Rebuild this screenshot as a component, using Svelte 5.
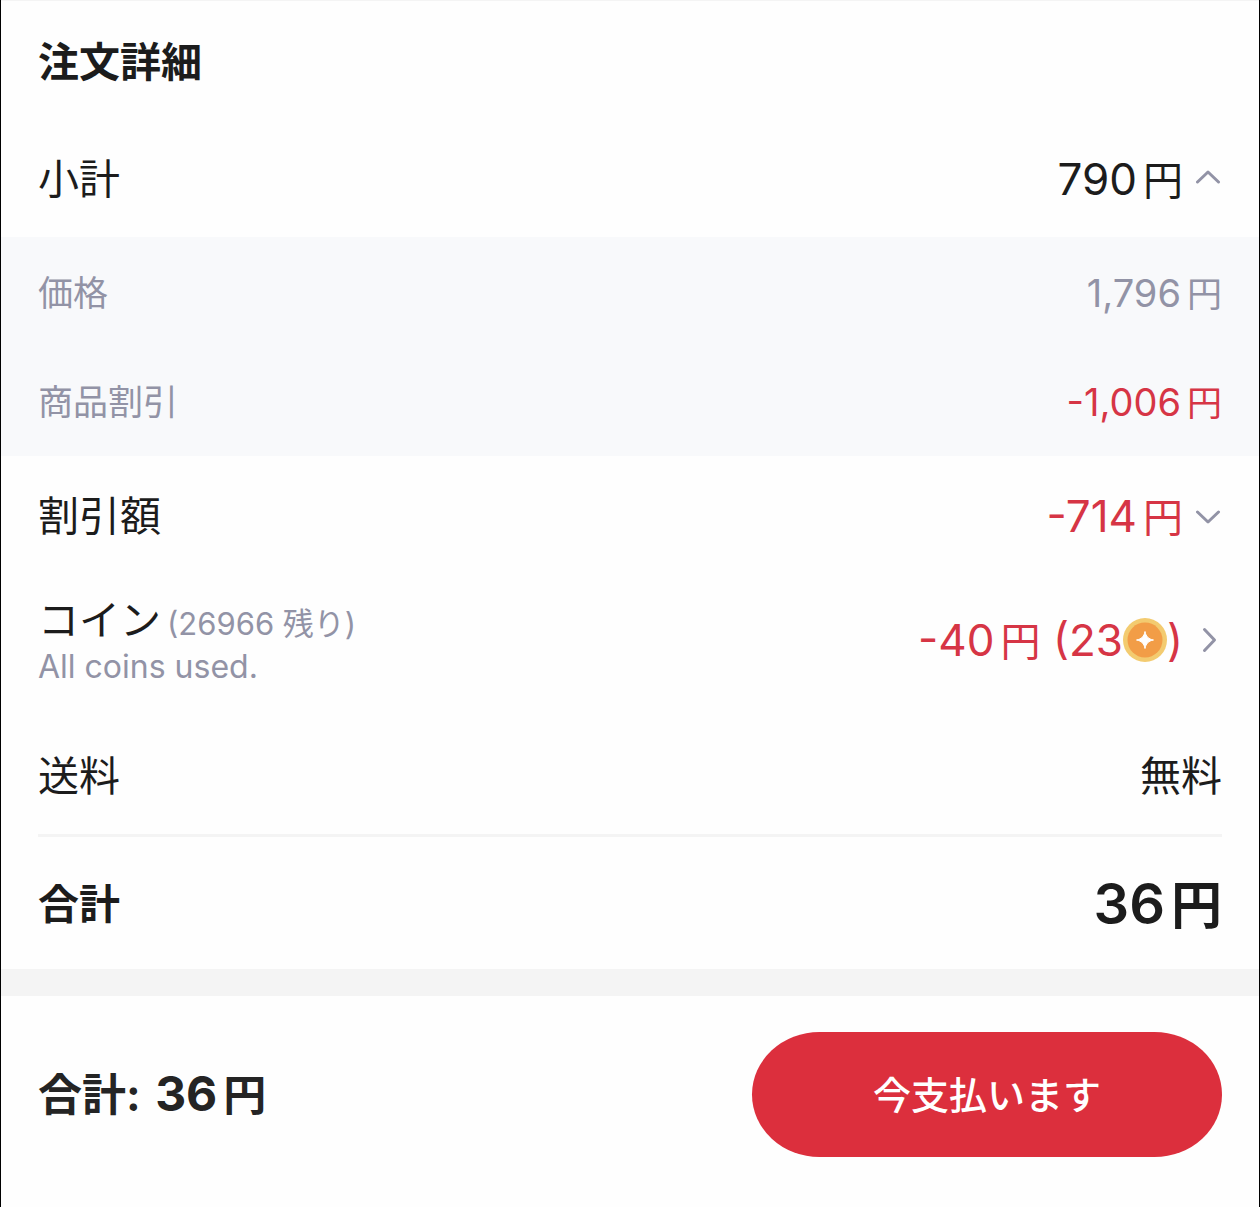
<script>
  let subtotalOpen = $state(true);
  let discountOpen = $state(false);

  const breakdown = [
    { label: '価格', amount: '1,796' },
    { label: '商品割引', amount: '-1,006', minus: true },
  ];
</script>

{#snippet yen(amount)}
  {amount}<span class="unit">円</span>
{/snippet}

{#snippet chevron(open)}
  <svg class="icon" viewBox="0 0 26 26" aria-hidden="true">
    {#if open}
      <path d="M1.500 16 12 6l10.500 10" />
    {:else}
      <path d="M1.500 9 12 19l10.500-10" />
    {/if}
  </svg>
{/snippet}

<main class="checkout">
  <section class="details">
    <h2>注文詳細</h2>

    <div class="row">
      <span>小計</span>
      <button
        type="button"
        class="value"
        aria-expanded={subtotalOpen}
        onclick={() => (subtotalOpen = !subtotalOpen)}
      >
        <span>{@render yen('790')}</span>
        {@render chevron(subtotalOpen)}
      </button>
    </div>

    {#if subtotalOpen}
      <div class="breakdown">
        {#each breakdown as item (item.label)}
          <div class="row sub">
            <span>{item.label}</span>
            <span class="value" class:minus={item.minus}>
              <span>{@render yen(item.amount)}</span>
            </span>
          </div>
        {/each}
      </div>
    {/if}

    <div class="row">
      <span>割引額</span>
      <button
        type="button"
        class="value minus"
        aria-expanded={discountOpen}
        onclick={() => (discountOpen = !discountOpen)}
      >
        <span>{@render yen('-714')}</span>
        {@render chevron(discountOpen)}
      </button>
    </div>

    <div class="row coins">
      <div>
        <div class="coin-label">コイン<span class="note">(26966 残り)</span></div>
        <div class="hint">All coins used.</div>
      </div>
      <button type="button" class="value minus">
        <span class="coin-amount">
          <span>{@render yen('-40')} (23</span>
          <svg class="coin" viewBox="0 0 44 44" aria-hidden="true">
            <circle cx="22" cy="22" r="22" fill="#f3cb70" />
            <circle cx="22" cy="22" r="17.5" fill="#f29d47" />
            <path
              d="M22 13.500c1 5 3.500 7.500 8.500 8.500c-5 1-7.500 3.500-8.500 8.500c-1-5-3.500-7.500-8.500-8.500c5-1 7.500-3.500 8.500-8.500z"
              fill="#fff"
              stroke="#fff"
              stroke-linejoin="round"
            />
          </svg>
          <span>)</span>
        </span>
        <svg class="icon" viewBox="0 0 26 26" aria-hidden="true">
          <path d="M8.500 2.500 18.500 13 8.500 23.500" />
        </svg>
      </button>
    </div>

    <div class="row">
      <span>送料</span>
      <span>無料</span>
    </div>

    <div class="row total">
      <strong>合計</strong>
      <strong class="value">
        <span>{@render yen('36')}</span>
      </strong>
    </div>
  </section>

  <footer>
    <p>合計: <span class="due">{@render yen('36')}</span></p>
    <button type="button" class="pay">今支払います</button>
  </footer>
</main>

<style>
  :global(body) {
    margin: 0;
    background: #fefefe;
  }

  .checkout {
    box-sizing: border-box;
    min-height: 100vh;
    border: 1px solid #000;
    border-width: 0 1px;
    color: #1c1c1c;
    font-family: Inter, "Noto Sans CJK JP", sans-serif;
    font-size: 41px;
    line-height: 40px;
  }

  .details {
    border-top: 1px solid #f4f4f4;
    border-bottom: 27px solid #f4f4f4;
  }

  h2 {
    margin: 0;
    padding: 41px 37px 39px;
    font-size: 41px;
    font-weight: 700;
  }

  button {
    border: 0;
    padding: 0;
    background: none;
    color: inherit;
    font: inherit;
    cursor: pointer;
  }

  .row {
    display: flex;
    align-items: center;
    justify-content: space-between;
    padding: 38px 37px;
  }

  .value {
    display: flex;
    align-items: center;
    gap: 13px;
    font-size: 44px;
    white-space: nowrap;
  }

  /* smaller than the digits, and must not stretch their line */
  .unit {
    margin-left: 6px;
    font-size: 40px;
    line-height: 0;
  }

  .minus {
    color: #d63545;
  }

  .breakdown {
    margin-bottom: 2px;
    padding-bottom: 1px;
    background: #f8f9fb;
  }

  .sub {
    padding: 36px 37px 33px;
    color: #9293a6;
    font-size: 35px;
  }

  .sub .value {
    font-size: 38px;
  }

  .sub .unit {
    font-size: 35px;
  }

  .coins {
    padding: 19px 37px 31px;
  }

  .coin-label {
    height: 54px;
    line-height: 54px;
  }

  .note {
    margin-left: 6px;
    color: #9293a6;
    font-size: 31px;
  }

  .hint {
    color: #9293a6;
    font-size: 32px;
  }

  .coin-amount {
    display: flex;
    align-items: center;
  }

  .coin {
    width: 44px;
    height: 44px;
  }

  .icon {
    width: 26px;
    height: 26px;
    fill: none;
    stroke: #9293a6;
    stroke-width: 3;
    stroke-linecap: round;
    stroke-linejoin: round;
  }

  .total {
    margin: 0 37px;
    padding: 47px 0 45px;
    border-top: 3px solid #f4f4f4;
  }

  .total .value {
    font-size: 56px;
    font-weight: 600;
  }

  .total .unit {
    font-size: 51px;
  }

  footer {
    display: flex;
    align-items: center;
    justify-content: space-between;
    gap: 24px;
    padding: 36px 37px 50px;
  }

  footer p {
    margin: 0;
    color: #242424;
    font-size: 44px;
    font-weight: 700;
  }

  .due {
    margin-left: 4px;
    font-size: 48px;
    line-height: 0;
  }

  .due .unit {
    font-size: 43px;
  }

  .pay {
    box-sizing: border-box;
    flex: 0 1 470px;
    padding: 43px 24px 42px;
    border-radius: 68px / 63px;
    background: #dc2f3d;
    color: #fff;
    font-size: 38px;
    font-weight: 500;
  }
</style>
